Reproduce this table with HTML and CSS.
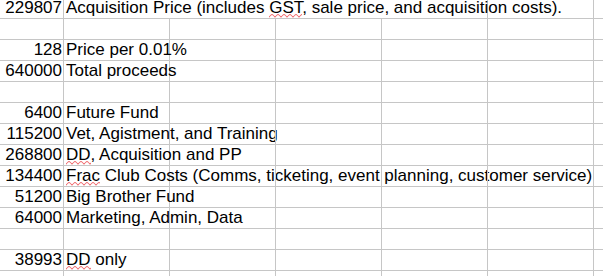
FILE: index.html
```html
<!DOCTYPE html>
<html>
<head>
<meta charset="utf-8">
<link rel="stylesheet" href="styles.css">
</head>
<body>
<div class="sheet">
  <div class="row"><div class="c num">229807</div><div class="c txt merge">Acquisition Price (includes <span class="sp">GST</span>, sale price, and acquisition costs).</div><div class="c"></div><div class="c"></div></div>
  <div class="row"><div class="c"></div><div class="c"></div><div class="c"></div><div class="c"></div><div class="c"></div><div class="c"></div><div class="c"></div></div>
  <div class="row"><div class="c num">128</div><div class="c txt">Price per 0.01%</div><div class="c"></div><div class="c"></div><div class="c"></div><div class="c"></div><div class="c"></div></div>
  <div class="row"><div class="c num">640000</div><div class="c txt">Total proceeds</div><div class="c"></div><div class="c"></div><div class="c"></div><div class="c"></div><div class="c"></div></div>
  <div class="row"><div class="c"></div><div class="c"></div><div class="c"></div><div class="c"></div><div class="c"></div><div class="c"></div><div class="c"></div></div>
  <div class="row"><div class="c num">6400</div><div class="c txt">Future Fund</div><div class="c"></div><div class="c"></div><div class="c"></div><div class="c"></div><div class="c"></div></div>
  <div class="row"><div class="c num">115200</div><div class="c txt">Vet, Agistment, and Training</div><div class="c"></div><div class="c"></div><div class="c"></div><div class="c"></div><div class="c"></div></div>
  <div class="row"><div class="c num">268800</div><div class="c txt"><span class="sp">DD</span>, Acquisition and PP</div><div class="c"></div><div class="c"></div><div class="c"></div><div class="c"></div><div class="c"></div></div>
  <div class="row"><div class="c num">134400</div><div class="c txt"><span class="sp">Frac</span> Club Costs (Comms, ticketing, event planning, customer service)</div><div class="c"></div><div class="c"></div><div class="c"></div><div class="c"></div><div class="c"></div></div>
  <div class="row"><div class="c num">51200</div><div class="c txt">Big Brother Fund</div><div class="c"></div><div class="c"></div><div class="c"></div><div class="c"></div><div class="c"></div></div>
  <div class="row"><div class="c num">64000</div><div class="c txt">Marketing, Admin, Data</div><div class="c"></div><div class="c"></div><div class="c"></div><div class="c"></div><div class="c"></div></div>
  <div class="row"><div class="c"></div><div class="c"></div><div class="c"></div><div class="c"></div><div class="c"></div><div class="c"></div><div class="c"></div></div>
  <div class="row"><div class="c num">38993</div><div class="c txt"><span class="sp">DD</span> only</div><div class="c"></div><div class="c"></div><div class="c"></div><div class="c"></div><div class="c"></div></div>
  <div class="row"><div class="c"></div><div class="c"></div><div class="c"></div><div class="c"></div><div class="c"></div><div class="c"></div><div class="c"></div></div>
</div>
</body>
</html>
```
FILE: styles.css
```css
html, body {
  margin: 0;
  padding: 0;
  background: #ffffff;
  width: 603px;
  height: 276px;
  overflow: hidden;
}
.sheet {
  margin-top: -2px;
  height: 278px;
  overflow: hidden;
  font-family: "Liberation Sans", Arial, sans-serif;
  font-size: 17px;
  color: #000000;
}
.row {
  display: grid;
  grid-template-columns: 64px 106px 106px 106px 106px 106px 9px;
  height: 21px;
}
.c {
  box-sizing: border-box;
  height: 21px;
  border-right: 1px solid #c6c6c6;
  border-bottom: 1px solid #c6c6c6;
  line-height: 20px;
  white-space: nowrap;
  overflow: visible;
}
.c:last-child {
  border-right: 0;
}
.num {
  text-align: right;
  padding-right: 1px;
}
.txt {
  padding-left: 2px;
}
.merge {
  grid-column: 2 / 6;
}
.sp {
  padding-bottom: 1px;
  background-image: url("data:image/svg+xml,%3Csvg xmlns='http://www.w3.org/2000/svg' width='6' height='4'%3E%3Cpath d='M0 3.5 Q1.5 0.5 3 0.5 Q4.5 0.5 6 3.5' fill='none' stroke='%23ee5a5e' stroke-width='1'/%3E%3C/svg%3E");
  background-repeat: repeat-x;
  background-position: left bottom;
  background-size: 6px 4px;
}
```
